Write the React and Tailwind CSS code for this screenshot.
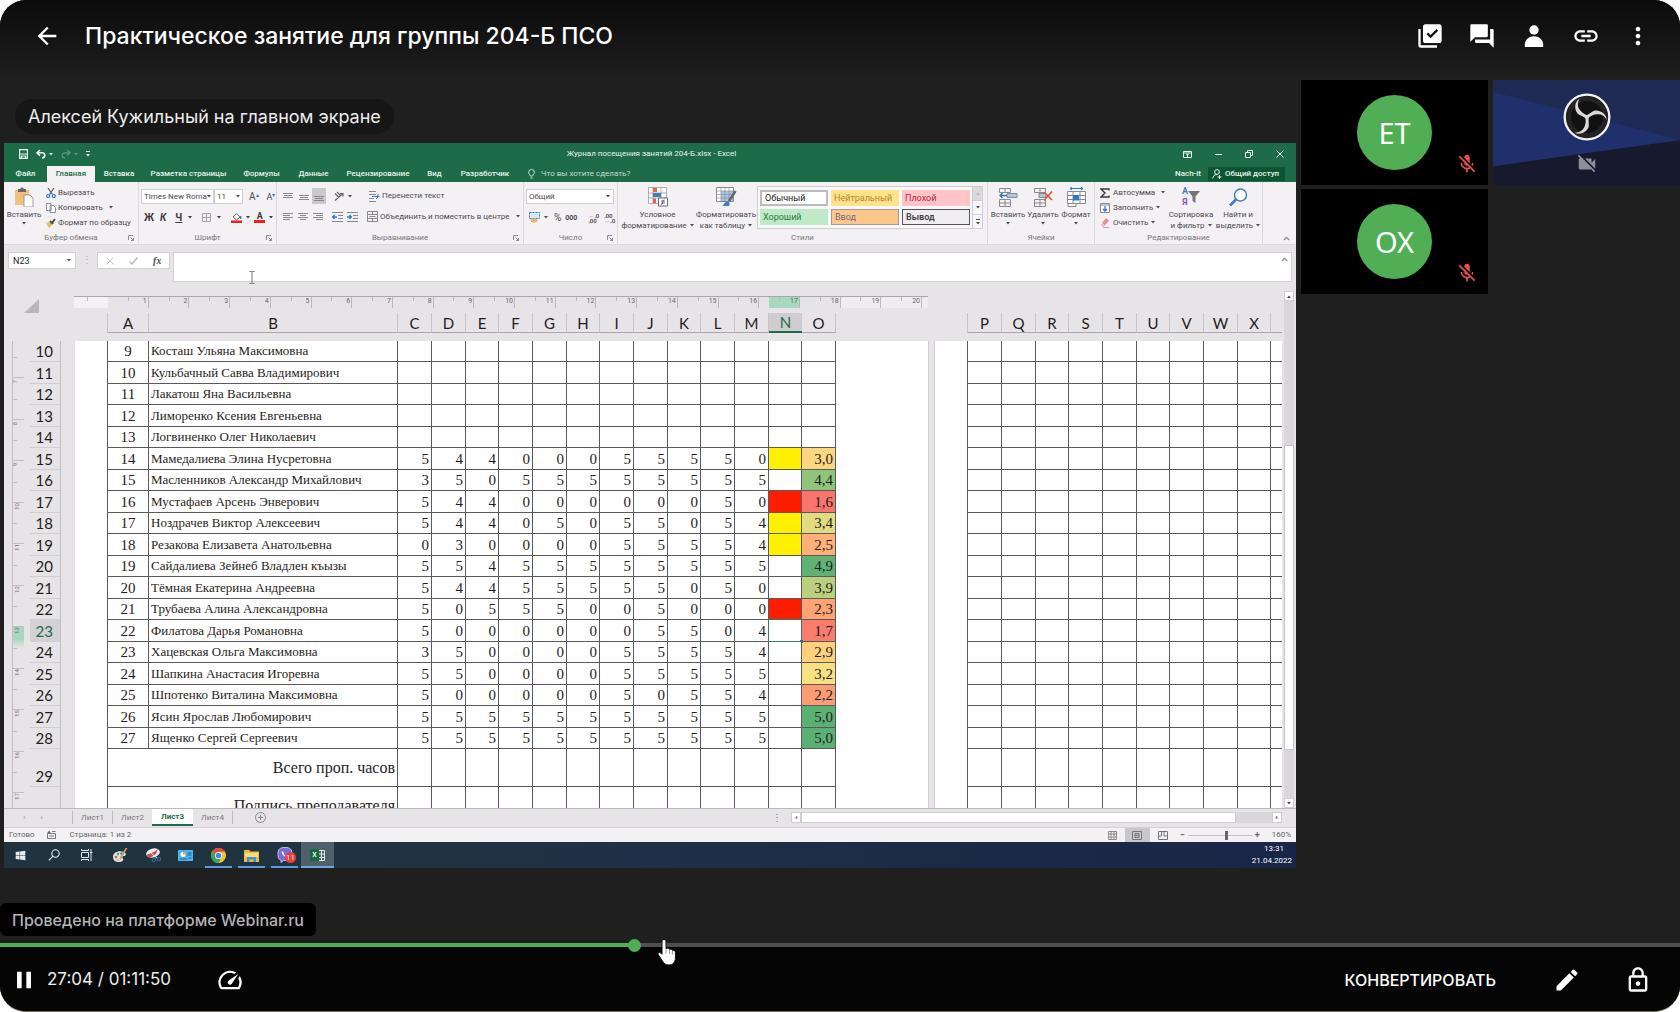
// src/App.jsx
import React, { useState } from "react";
import {
  MdArrowBack,
  MdLibraryAddCheck,
  MdForum,
  MdLink,
  MdMoreVert,
  MdMicOff,
  MdVideocamOff,
  MdPause,
  MdOutlineSpeed,
  MdEdit,
  MdOutlineLock,
} from "react-icons/md";
import { FaWindows } from "react-icons/fa";

const YELLOW = "bg-[#ffef00]";
const RED = "bg-[#ff1d00]";

const ROWS = [
  { n: 9, name: "Косташ Ульяна Максимовна" },
  { n: 10, name: "Кульбачный Савва Владимирович" },
  { n: 11, name: "Лакатош Яна Васильевна" },
  { n: 12, name: "Лиморенко Ксения Евгеньевна" },
  { n: 13, name: "Логвиненко Олег Николаевич" },
  { n: 14, name: "Мамедалиева Элина Нусретовна", marks: "54400055550", fill: YELLOW, avg: "3,0", tone: "bg-[#fdd77f]" },
  { n: 15, name: "Масленников Александр Михайлович", marks: "35055555555", avg: "4,4", tone: "bg-[#8fc47c]" },
  { n: 16, name: "Мустафаев Арсень Энверович", marks: "54400000050", fill: RED, avg: "1,6", tone: "bg-[#f8746c]" },
  { n: 17, name: "Ноздрачев Виктор Алексеевич", marks: "54405055054", fill: YELLOW, avg: "3,4", tone: "bg-[#e2dc80]" },
  { n: 18, name: "Резакова Елизавета Анатольевна", marks: "03000055554", fill: YELLOW, avg: "2,5", tone: "bg-[#fdb077]" },
  { n: 19, name: "Сайдалиева Зейнеб Владлен къызы", marks: "55455555555", avg: "4,9", tone: "bg-[#5fb274]" },
  { n: 20, name: "Тёмная Екатерина Андреевна", marks: "54455555050", avg: "3,9", tone: "bg-[#bbd07e]" },
  { n: 21, name: "Трубаева Алина Александровна", marks: "50555005000", fill: RED, avg: "2,3", tone: "bg-[#fca474]" },
  { n: 22, name: "Филатова Дарья Романовна", marks: "50000005504", selected: true, avg: "1,7", tone: "bg-[#f97c6d]" },
  { n: 23, name: "Хацевская Ольга Максимовна", marks: "35000055554", avg: "2,9", tone: "bg-[#fdd17e]" },
  { n: 24, name: "Шапкина Анастасия Игоревна", marks: "55000055555", avg: "3,2", tone: "bg-[#f8e182]" },
  { n: 25, name: "Шпотенко Виталина Максимовна", marks: "50000050554", avg: "2,2", tone: "bg-[#fb9d73]" },
  { n: 26, name: "Ясин Ярослав Любомирович", marks: "55555555555", avg: "5,0", tone: "bg-[#5ab173]" },
  { n: 27, name: "Ященко Сергей Сергеевич", marks: "55555555555", avg: "5,0", tone: "bg-[#5ab173]" },
];

const COLS_LEFT = "CDEFGHIJKLMNO".split("");
const COLS_RIGHT = "PQRSTUVWX".split("");
const V_RULER = ["7", "8", "9", "10", "11", "12", "13", "14", "15", "16", "17"];

export default function App() {
  return (
    <div className="min-h-screen bg-white font-[Inter,sans-serif]">
      <div className="flex min-h-screen flex-col overflow-hidden rounded-[26px] border-b border-[#6f7040] bg-[#1f1f1f] text-white">
        <Header />
        <main className="flex flex-1 items-start gap-[5px]">
          <section className="min-w-0 flex-1 pl-1 pt-[19px]">
            <div className="ml-[11px] flex h-[35px] w-fit items-center rounded-full bg-[#161616] px-[13px] text-[18px] text-[#ececec]">
              Алексей Кужильный на главном экране
            </div>
            <div className="mt-[9px]">
              <Excel />
            </div>
          </section>
          <Participants />
        </main>
        <Player />
      </div>
    </div>
  );
}

function Header() {
  return (
    <header className="flex h-20 items-start bg-linear-to-b from-[#0b0b0b] to-[#1f1f1f] pl-[33px] pr-[28px] pt-[22px]">
      <button aria-label="Назад">
        <MdArrowBack size={28} />
      </button>
      <h1 className="ml-6 flex-1 text-[23px] font-medium leading-7">
        Практическое занятие для группы 204-Б ПСО
      </h1>
      <div className="flex gap-6">
        <button aria-label="Тесты"><MdLibraryAddCheck size={28} /></button>
        <button aria-label="Чат"><MdForum size={28} /></button>
        <button aria-label="Участники">
          <svg width="28" height="28" viewBox="0 0 28 28" fill="currentColor">
            <circle cx="14" cy="8" r="4.7" />
            <path d="M4.8 25v-2.2c0-5.4 4.6-8.6 9.2-8.6s9.2 3.2 9.2 8.6V25z" />
          </svg>
        </button>
        <button aria-label="Ссылка"><MdLink size={28} /></button>
        <button aria-label="Ещё"><MdMoreVert size={28} /></button>
      </div>
    </header>
  );
}

/* ---------- участники ---------- */

function Participants() {
  return (
    <aside className="grid w-[379px] flex-none grid-cols-2 gap-x-[5px] gap-y-1">
      <Tile initials="ET" />
      <div className="relative aspect-video overflow-hidden bg-[#171a2e]">
        <svg className="absolute inset-0 h-full w-full" viewBox="0 0 187 105" preserveAspectRatio="none">
          <path d="M0 0H187V60L0 86Z" fill="#1f2a54" />
          <path d="M0 12L187 60L0 86Z" fill="#20306c" />
        </svg>
        <div className="relative flex flex-col items-center pt-[13px]">
          <ObsLogo />
          <MdVideocamOff className="mt-3 text-[#8e9099]" size={22} />
        </div>
      </div>
      <Tile initials="OX" />
    </aside>
  );
}

function Tile({ initials }) {
  return (
    <div className="relative flex aspect-video items-center justify-center bg-black">
      <div className="flex h-[75px] w-[75px] items-center justify-center rounded-full bg-[#50ae55] font-['Noto_Sans',sans-serif] text-[29px]">
        {initials}
      </div>
      <MdMicOff className="absolute bottom-[10px] right-[10px] text-[#ea4f4b]" size={22} />
    </div>
  );
}

function ObsLogo() {
  const blade = "M-5 -2C-4 10 -3 18 -7 28C-12 40 -22 47 -37 47C-20 56 0 44 5 30C7 20 3 10 6 -3Z";
  return (
    <svg width="48" height="48" viewBox="-72 -72 144 144">
      <circle r="67" fill="#242224" stroke="#f4f4f4" strokeWidth="7" />
      <circle r="48" fill="#121112" />
      <g fill="#d9d7d9">
        <path d={blade} />
        <path d={blade} transform="rotate(120)" />
        <path d={blade} transform="rotate(240)" />
      </g>
    </svg>
  );
}

/* ---------- плеер ---------- */

function Player() {
  const [time, setTime] = useState(1624);
  const total = 4310;
  const pct = (time / total) * 100;

  return (
    <footer className="relative">
      <div className="mb-[7px] flex h-[33px] w-fit items-center rounded-md bg-black px-3 text-[16px] font-medium text-[#b4b4b4]">
        Проведено на платформе Webinar.ru
      </div>
      <input
        type="range"
        aria-label="Позиция записи"
        min="0"
        max={total}
        value={time}
        onChange={(e) => setTime(Number(e.target.value))}
        className="block h-1 w-full appearance-none [&::-webkit-slider-thumb]:h-[13px] [&::-webkit-slider-thumb]:w-[13px] [&::-webkit-slider-thumb]:appearance-none [&::-webkit-slider-thumb]:rounded-full [&::-webkit-slider-thumb]:bg-[#50ae55]"
        style={{ background: `linear-gradient(to right, #50ae55 ${pct}%, #4f4f4f ${pct}%)` }}
      />
      <svg className="absolute left-[657px] top-[35px]" width="22" height="28" viewBox="0 0 22 28">
        <path
          d="M7 1.5c1.3 0 2 .8 2 2.1v7l1.2-.4c1.2-.2 2 .3 2.3 1.2 1.4-.5 2.5 0 2.9 1.1 1.3-.4 3 .3 3 2.2V20c0 4-2.4 7-6.4 7-3.5 0-4.8-1.3-6.6-4.1L1.5 17c-1-1.7.8-3.3 2.4-1.9L5 16.3V3.6c0-1.3.7-2.1 2-2.1z"
          fill="#fff"
          stroke="#111"
        />
        <path d="M9 10.5v5M12.5 11.5v4.5M15.5 12.5V16.5" stroke="#777" strokeWidth=".7" />
      </svg>
      <div className="flex h-16 items-center bg-[#050505] pl-[10px] pr-[28px] pt-[2px]">
        <button aria-label="Пауза"><MdPause size={28} /></button>
        <span className="ml-[9px] w-[169px] text-[17px] text-[#ececec]">27:04 / 01:11:50</span>
        <button aria-label="Скорость"><MdOutlineSpeed size={28} /></button>
        <button className="ml-auto text-[16px] font-medium">КОНВЕРТИРОВАТЬ</button>
        <button aria-label="Редактировать" className="ml-[57px]"><MdEdit size={28} /></button>
        <button aria-label="Заблокировать" className="ml-[43px]"><MdOutlineLock size={28} /></button>
      </div>
    </footer>
  );
}

/* ---------- окно Excel ---------- */

function Excel() {
  return (
    <div className="overflow-hidden bg-[#e6e4e7] font-[Roboto,sans-serif] text-[8px] leading-[10px] text-[#4c4a4e]">
      <TitleBar />
      <Ribbon />
      <FormulaBar />
      <Sheet />
      <SheetTabs />
      <StatusBar />
      <Taskbar />
    </div>
  );
}

function TitleBar() {
  return (
    <div className="h-[39px] bg-[#1e6c47] text-[#e8f3ed]">
      <div className="flex h-[22px] items-center justify-between">
        <div className="flex flex-1 items-center gap-2 pl-[15px]">
          <button aria-label="Сохранить">
            <svg width="9" height="10" viewBox="0 0 9 10" fill="none" stroke="currentColor" strokeWidth="1.2">
              <path d="M.6.6h7.8v8.8H.6zM.6 5h7.8M2.5 9.4V7h4v2.4" />
            </svg>
          </button>
          <button aria-label="Отменить" className="flex items-center gap-[3px]">
            <svg width="10" height="10" viewBox="0 0 10 10" fill="none" stroke="currentColor" strokeWidth="1.6">
              <path d="M4 1L1 3.8 4 6.6M1 3.8h5c4 0 3.6 5 0 5.2" />
            </svg>
            <Caret />
          </button>
          <button aria-label="Повторить" className="flex items-center gap-[3px] opacity-30">
            <svg width="10" height="10" viewBox="0 0 10 10" fill="none" stroke="currentColor" strokeWidth="1.3">
              <path d="M6 1l3 2.8L6 6.6M9 3.8H4c-4 0-3.6 5 0 5.2" />
            </svg>
            <Caret />
          </button>
          <svg width="4" height="6" viewBox="0 0 4 6" fill="currentColor"><path d="M0 0h4v1H0zM0 3h4L2 5.5z" /></svg>
        </div>
        <div>Журнал посещения занятий 204-Б.xlsx - Excel</div>
        <div className="flex flex-1 items-center justify-end gap-[23px] pr-3">
          <button aria-label="Параметры ленты">
            <svg width="9" height="7" viewBox="0 0 9 7" fill="none" stroke="currentColor">
              <path d="M.5.5h8v6h-8zM.5 2h8M4.5 6V3.2M3.2 4.2l1.3-1.3 1.3 1.3" />
            </svg>
          </button>
          <button aria-label="Свернуть">
            <svg width="7" height="7" viewBox="0 0 7 7" stroke="currentColor"><path d="M0 3.5h7" /></svg>
          </button>
          <button aria-label="Развернуть">
            <svg width="8" height="8" viewBox="0 0 8 8" fill="none" stroke="currentColor">
              <path d="M.5 2.5h5v5h-5zM2.5 2.5v-2h5v5h-2" />
            </svg>
          </button>
          <button aria-label="Закрыть">
            <svg width="8" height="8" viewBox="0 0 8 8" stroke="currentColor"><path d="M.5.5l7 7M7.5.5l-7 7" /></svg>
          </button>
        </div>
      </div>
      <nav className="flex h-[17px] items-center font-medium">
        <button className="w-[43px]">Файл</button>
        <button className="h-4 w-12 self-end bg-[#f3f1f4] text-[#1e6c47]">Главная</button>
        <button className="w-12">Вставка</button>
        <button className="w-[91px]">Разметка страницы</button>
        <button className="w-[55px]">Формулы</button>
        <button className="w-[49px]">Данные</button>
        <button className="w-[80px]">Рецензирование</button>
        <button className="w-[33px]">Вид</button>
        <button className="w-[68px]">Разработчик</button>
        <button className="ml-[9px] flex items-center gap-[6px] font-normal text-[#c2dccf]">
          <svg width="7" height="10" viewBox="0 0 7 10" fill="none" stroke="currentColor">
            <path d="M2.3 7C2.3 5.5.6 5 .6 3.2a2.9 2.7 0 015.8 0C6.4 5 4.7 5.5 4.7 7zM2.3 9h2.4" />
          </svg>
          Что вы хотите сделать?
        </button>
        <span className="ml-auto">Nach-it</span>
        <button className="ml-[7px] mr-[11px] flex h-[14px] w-[77px] items-center gap-[3px] bg-[#0d5532] pl-1">
          <svg width="10" height="10" viewBox="0 0 10 10" fill="none" stroke="currentColor">
            <circle cx="5" cy="3" r="2.4" />
            <path d="M.8 9.5C1 7 2.5 5.5 5 5.5M7.5 6v4M5.5 8h4" />
          </svg>
          Общий доступ
        </button>
      </nav>
    </div>
  );
}

function Caret({ className = "" }) {
  return (
    <svg className={className} width="4" height="3" viewBox="0 0 4 3" fill="currentColor">
      <path d="M0 0h4L2 2.5z" />
    </svg>
  );
}

function Group({ label, className, launcher, children }) {
  return (
    <div className={`flex flex-none flex-col border-r border-[#dad8dc] ${className}`}>
      <div className="h-[51px] pt-[3px]">{children}</div>
      <div className="relative text-center text-[#77757a]">
        {label}
        {launcher && (
          <svg className="absolute right-1 top-[2px]" width="6" height="6" viewBox="0 0 6 6" fill="none" stroke="currentColor" strokeWidth=".8">
            <path d="M.5 5V.5H5M2.5 2.5l3 3M5.5 3v2.5H3" />
          </svg>
        )}
      </div>
    </div>
  );
}

function BigButton({ lines, caretBelow, className, children }) {
  return (
    <button className={`flex flex-col items-center pt-[2px] ${className}`}>
      <span className="flex h-5 items-center">{children}</span>
      <span className="mt-[3px] block whitespace-nowrap">{lines[0]}</span>
      <span className="flex h-[11px] items-center gap-[3px] whitespace-nowrap">
        {lines[1]}
        <Caret className={caretBelow ? "mb-1" : ""} />
      </span>
    </button>
  );
}

function AlignIcon({ rows }) {
  return (
    <svg width="10" height="9" viewBox="0 0 10 9" stroke="#8a888c">
      {rows.map(([a, b], i) => (
        <path key={i} d={`M${a} ${i * 2 + 1.5}H${b}`} />
      ))}
    </svg>
  );
}

function IndentIcon({ out }) {
  return (
    <svg width="11" height="10" viewBox="0 0 11 10" fill="none" stroke="#8a888c">
      <path d="M0 .5h11M6 3.5h5M6 6.5h5M0 9.5h11" />
      <path d={out ? "M5 5H.8M2.5 3L.6 5l1.9 2" : "M0 5h4.2M2.5 3l1.9 2-1.9 2"} stroke="#2f78c4" strokeWidth="1.3" />
    </svg>
  );
}

function CellsIcon({ children }) {
  return (
    <svg width="19" height="19" viewBox="0 0 19 19" fill="none" stroke="#8a888c">
      <path d="M.5.5h11v4H.5zM6 .5v4M.5 11.5h11v7H.5zM6 11.5v7M.5 15h11" />
      {children}
    </svg>
  );
}

function Ribbon() {
  return (
    <div className="flex h-[62px] overflow-hidden bg-[#f3f1f4]">
      <Group label="Буфер обмена" className="w-[135px]" launcher>
        <div className="flex">
          <BigButton lines={["Вставить", ""]} caretBelow className="w-10">
            <svg width="20" height="20" viewBox="0 0 20 20">
              <path d="M1 3h14v15H1z" fill="#edc27a" />
              <path d="M4 2h2l2-2 2 2h2v3H4z" fill="#67656a" />
              <path d="M10 8h6l3 3v9h-9z" fill="#fff" stroke="#8a888c" strokeWidth=".8" />
            </svg>
          </BigButton>
          <div className="flex flex-col pl-[2px]">
            <button className="flex h-[15px] items-center gap-[2px] whitespace-nowrap">
              <svg width="10" height="10" viewBox="0 0 10 10" fill="none" stroke="#5a5f6a" strokeWidth="1.2">
                <path d="M2 0l4.5 6.5M8 0L3.5 6.5" />
                <circle cx="2.2" cy="8" r="1.5" stroke="#2f78c4" />
                <circle cx="7.8" cy="8" r="1.5" stroke="#2f78c4" />
              </svg>
              Вырезать
            </button>
            <button className="flex h-[15px] items-center gap-[2px] whitespace-nowrap">
              <svg width="10" height="10" viewBox="0 0 10 10" fill="#fff" stroke="#7b8596" strokeWidth=".9">
                <path d="M.5.5h4.5v7H.5zM4 2.5h3.5l2 2v5H4z" />
              </svg>
              Копировать <Caret className="ml-1" />
            </button>
            <button className="flex h-[15px] items-center gap-[2px] whitespace-nowrap">
              <svg width="10" height="10" viewBox="0 0 10 10">
                <path d="M0 5l4-1 2 3-3 3z" fill="#edb65e" />
                <path d="M4 3l3 3M6 5l3-4" stroke="#4c4a4e" strokeWidth="1.8" />
              </svg>
              Формат по образцу
            </button>
          </div>
        </div>
      </Group>

      <Group label="Шрифт" className="w-[138px]" launcher>
        <div className="flex items-center pl-[2px] pt-1">
          <div className="flex h-[15px] w-[73px] items-center border border-[#cfcdd1] bg-white px-[2px]">
            <input aria-label="Шрифт" className="min-w-0 flex-1" defaultValue="Times New Roma" />
            <Caret />
          </div>
          <div className="flex h-[15px] w-[29px] items-center border border-[#cfcdd1] bg-white px-[2px]">
            <input aria-label="Размер шрифта" className="min-w-0 flex-1" defaultValue="11" />
            <Caret />
          </div>
          <button className="ml-[6px] text-[10px]">A<sup className="text-[6px] text-[#2f78c4]">▴</sup></button>
          <button className="ml-2 text-[9px]">A<sup className="text-[6px] text-[#2f78c4]">▾</sup></button>
        </div>
        <div className="mt-2 flex items-center pl-[5px] text-[10px] text-[#3c3a3e]">
          <button className="font-bold">Ж</button>
          <button className="ml-[6px] font-bold italic">К</button>
          <button className="ml-[9px] font-bold underline">Ч</button>
          <Caret className="ml-[6px]" />
          <button aria-label="Границы" className="ml-[10px]">
            <svg width="9" height="9" viewBox="0 0 9 9" fill="none" stroke="#a5a3a7">
              <path d="M.5.5h8v8h-8zM4.5.5v8M.5 4.5h8" />
            </svg>
          </button>
          <Caret className="ml-[6px]" />
          <button aria-label="Цвет заливки" className="ml-[10px]">
            <svg width="11" height="11" viewBox="0 0 11 11">
              <path d="M2 5l3.5-3.5L9 5 5.5 8z" fill="#fff" stroke="#67656a" />
              <path d="M9.5 4v3" stroke="#2f78c4" strokeWidth="1.5" />
              <path d="M0 8.5h11V11H0z" fill="#f51f12" />
            </svg>
          </button>
          <Caret className="ml-1" />
          <button aria-label="Цвет шрифта" className="ml-1 h-[11px] w-[11px] border-b-[3px] border-[#f51f12] text-[9px] font-bold leading-[8px]">А</button>
          <Caret className="ml-1" />
        </div>
      </Group>

      <Group label="Выравнивание" className="w-[247px]" launcher>
        <div className="flex items-center pl-[6px] pt-[3px]">
          <AlignIcon rows={[[0, 10], [1, 9], [0, 10]]} />
          <span className="w-[6px]" />
          <AlignIcon rows={[[0, 0], [0, 10], [1, 9], [0, 10]]} />
          <span className="ml-[3px] flex h-4 w-[14px] items-end justify-center bg-[#cac8cc] pb-[2px]">
            <AlignIcon rows={[[0, 0], [0, 10], [1, 9], [0, 10]]} />
          </span>
          <svg className="ml-2" width="11" height="10" viewBox="0 0 11 10" fill="none" stroke="#67656a" strokeWidth="1.2">
            <path d="M1 2.5l4 4M3 1l4 4M1 9.5l8-7M6 2.5h3v3" />
          </svg>
          <Caret className="ml-[3px]" />
          <button className="ml-[17px] flex items-center gap-[2px] whitespace-nowrap">
            <svg width="11" height="11" viewBox="0 0 11 11" fill="none" stroke="#8a888c">
              <path d="M0 .5h7M0 3.5h7M0 7.5h5M0 10.5h7" />
              <path d="M3 5.5h7.5M9 3v3L7 8" stroke="#2f78c4" />
            </svg>
            Перенести текст
          </button>
        </div>
        <div className="mt-[7px] flex items-center pl-[6px]">
          <AlignIcon rows={[[0, 10], [0, 7], [0, 10], [0, 7]]} />
          <span className="w-[5px]" />
          <AlignIcon rows={[[0, 10], [2, 8], [0, 10], [2, 8]]} />
          <span className="w-[5px]" />
          <AlignIcon rows={[[0, 10], [3, 10], [0, 10], [3, 10]]} />
          <span className="w-[9px]" />
          <IndentIcon out />
          <span className="w-1" />
          <IndentIcon />
          <button className="ml-[9px] flex items-center gap-[2px] whitespace-nowrap">
            <svg width="11" height="11" viewBox="0 0 11 11" fill="none" stroke="#8a888c">
              <path d="M.5.5h10v10H.5zM.5 3.5h10M.5 7.5h10M5.5.5v3M5.5 7.5v3M2.5 5.5h6" />
            </svg>
            Объединить и поместить в центре
            <Caret className="ml-1" />
          </button>
        </div>
      </Group>

      <Group label="Число" className="w-[94px]" launcher>
        <div className="pl-[2px] pt-1">
          <div className="relative w-[88px]">
            <select aria-label="Формат числа" className="block h-[15px] w-full appearance-none border border-[#cfcdd1] bg-white pl-[2px]">
              <option>Общий</option>
            </select>
            <Caret className="pointer-events-none absolute right-1 top-[6px]" />
          </div>
        </div>
        <div className="mt-2 flex items-center pl-[5px]">
          <svg width="11" height="11" viewBox="0 0 11 11">
            <path d="M.5.5h10v6H.5z" fill="#d8e8f8" stroke="#2f78c4" strokeDasharray="2 1" />
            <ellipse cx="5" cy="8.5" rx="3.5" ry="2" fill="#edb65e" />
          </svg>
          <Caret className="ml-1" />
          <span className="ml-[6px] text-[10px]">%</span>
          <span className="ml-1 text-[7px] font-bold">000</span>
          <span className="ml-[11px] text-[6px] font-semibold leading-[5px]"><span className="text-[#2f78c4]">←</span>,0<br />,00</span>
          <span className="ml-[5px] text-[6px] font-semibold leading-[5px]">,00<br /><span className="text-[#2f78c4]">→</span>,0</span>
        </div>
      </Group>

      <Group label="Стили" className="w-[370px]">
        <div className="flex pl-[2px]">
          <BigButton lines={["Условное", "форматирование"]} className="w-[75px]">
            <svg width="20" height="20" viewBox="0 0 20 20" fill="none" stroke="#9a989c" strokeWidth=".8">
              <path d="M.5.5h18v16H.5zM5 .5v16M13 .5v16M.5 6h18M.5 11h18" fill="#fff" />
              <path d="M5 1h4v4H5zM5 11.5h3V16H5z" fill="#e0693a" stroke="none" />
              <path d="M5 6h8v4H5z" fill="#3f7fc4" stroke="none" />
              <path d="M10.5 11h9v8h-9zM13 14h4M13 16h4M16 12.5L13.5 18" fill="#fff" stroke="#4c4a4e" />
            </svg>
          </BigButton>
          <BigButton lines={["Форматировать", "как таблицу"]} className="w-[62px]">
            <svg width="21" height="20" viewBox="0 0 21 20">
              <path d="M.5.5h17v14H.5z" fill="#fff" stroke="#8a888c" />
              <path d="M5 4h12v10H5z" fill="#a9c8e8" />
              <path d="M5 .5v14M9 .5v14M13 .5v14M.5 4h17M.5 7.5h17M.5 11h17" stroke="#8a888c" strokeWidth=".6" />
              <path d="M19.5 4L13 14" stroke="#67656a" strokeWidth="2.5" />
              <path d="M6 19c2 0 2-5 6-4.5 3 1.5 1 4.5 1 4.5z" fill="#3f7fc4" />
            </svg>
          </BigButton>
          <div className="mt-px flex h-[43px] border border-[#cfcdd1] bg-[#f8f7f9]">
            <div className="grid grid-cols-[68px_68px_68px] content-center gap-x-[3px] gap-y-[3px] px-[2px] text-[9px] leading-3">
              <button className="h-4 border-2 border-[#bdbbbf] bg-white pl-[3px] text-left text-[#222]">Обычный</button>
              <button className="h-4 bg-[#ffe28b] pl-[3px] text-left text-[#b8872a]">Нейтральный</button>
              <button className="h-4 bg-[#ffc4c8] pl-[3px] text-left text-[#b02a3c]">Плохой</button>
              <button className="h-4 bg-[#bfeac8] pl-[3px] text-left text-[#2b7a3c]">Хороший</button>
              <button className="h-4 border border-[#a09a94] bg-[#fdc78c] pl-[3px] text-left text-[#746a86]">Ввод</button>
              <button className="h-4 border border-[#55535a] bg-[#f0eef1] pl-[3px] text-left font-semibold text-[#3f3f3f]">Вывод</button>
            </div>
            <div className="flex w-[10px] flex-col divide-y divide-[#cfcdd1] border-l border-[#cfcdd1]">
              <button aria-label="Вверх" className="flex flex-1 items-center justify-center bg-[#dcdadd] text-[#b5b3b7]"><Caret className="rotate-180" /></button>
              <button aria-label="Вниз" className="flex flex-1 items-center justify-center"><Caret /></button>
              <button aria-label="Все стили" className="flex flex-1 items-center justify-center">
                <svg width="4" height="6" viewBox="0 0 4 6" fill="currentColor"><path d="M0 0h4v1H0zM0 3h4L2 5.5z" /></svg>
              </button>
            </div>
          </div>
        </div>
      </Group>

      <Group label="Ячейки" className="w-[107px]">
        <div className="flex pl-[2px]">
          <BigButton lines={["Вставить", ""]} caretBelow className="w-9">
            <CellsIcon>
              <path d="M8 5.5h10v4H8z" fill="#a9c8e8" />
              <path d="M8 7.5H1M3.5 5L1 7.5 3.5 10" stroke="#2f78c4" strokeWidth="1.5" />
            </CellsIcon>
          </BigButton>
          <BigButton lines={["Удалить", ""]} caretBelow className="w-[34px]">
            <CellsIcon>
              <path d="M5 5.5h7v4H5z" fill="#a9c8e8" />
              <path d="M10 4l8 8M18 3.5l-8 9" stroke="#e0592a" strokeWidth="1.6" />
            </CellsIcon>
          </BigButton>
          <BigButton lines={["Формат", ""]} caretBelow className="w-8">
            <svg width="19" height="20" viewBox="0 0 19 20" fill="none" stroke="#8a888c">
              <path d="M.5 4.5h18v12H.5zM6 4.5v12M13 4.5v12M.5 8.5h18M.5 12.5h18M1 17v2.5h8V17" fill="#fff" />
              <path d="M6 8h6v5.5H6z" fill="#2f78c4" stroke="none" />
              <path d="M3 1.5h13M5 0L3 1.5 5 3M14 0l2 1.5L14 3" stroke="#2f78c4" />
            </svg>
          </BigButton>
        </div>
      </Group>

      <Group label="Редактирование" className="w-[168px]">
        <div className="flex pl-[5px]">
          <div className="flex w-[66px] flex-col">
            <button className="flex h-[15px] items-center gap-[3px] whitespace-nowrap">
              <svg width="10" height="10" viewBox="0 0 10 10" fill="none" stroke="#3c3a3e" strokeWidth="1.4">
                <path d="M9 2.5V1H1l4 4-4 4h8V7.5" />
              </svg>
              Автосумма <Caret className="ml-[3px]" />
            </button>
            <button className="flex h-[15px] items-center gap-[3px] whitespace-nowrap">
              <svg width="10" height="10" viewBox="0 0 10 10" fill="#fff" stroke="#8a888c">
                <path d="M.5.5h9v9h-9zM.5 2h9" />
                <path d="M5 3v5M3 6l2 2 2-2" stroke="#2f78c4" strokeWidth="1.3" fill="none" />
              </svg>
              Заполнить <Caret />
            </button>
            <button className="flex h-[15px] items-center gap-[3px] whitespace-nowrap">
              <svg width="10" height="10" viewBox="0 0 10 10">
                <path d="M2 5l4-5 3 2.5-4 5z" fill="#f08a98" />
                <path d="M2 5L.8 7l2 2L5 7.5z" fill="#f6b8c0" />
                <path d="M3 9.5h6" stroke="#b5a3a7" />
              </svg>
              Очистить <Caret />
            </button>
          </div>
          <BigButton lines={["Сортировка", "и фильтр"]} className="w-[50px]">
            <span className="flex items-center">
              <span className="text-[9px] font-bold leading-[11px]">
                <span className="block text-[#3f7fc4]">А</span>
                <span className="block text-[#9355b0]">Я</span>
              </span>
              <svg width="12" height="12" viewBox="0 0 12 12" fill="#77757a"><path d="M0 0h12L7.5 5.5V12L4.5 10V5.5z" /></svg>
            </span>
          </BigButton>
          <BigButton lines={["Найти и", "выделить"]} className="w-[44px]">
            <svg width="19" height="19" viewBox="0 0 19 19" fill="none" stroke="#3f7fc4">
              <circle cx="11.5" cy="7" r="6" strokeWidth="1.5" fill="#fff" />
              <path d="M7 11.5L1 17.5" strokeWidth="2.6" />
            </svg>
          </BigButton>
        </div>
      </Group>
      <button aria-label="Свернуть ленту" className="ml-auto mr-[6px] self-end pb-[3px]">
        <Chevron />
      </button>
    </div>
  );
}

function Chevron() {
  return (
    <svg width="7" height="5" viewBox="0 0 7 5" fill="none" stroke="#8a888c" strokeWidth="1.2">
      <path d="M.8 4l2.7-2.7L6.2 4" />
    </svg>
  );
}

function FormulaBar() {
  return (
    <div className="flex items-start border-t border-[#dbd9dc] pl-1 pr-1 pt-[7px]">
      <div className="flex h-[17px] w-[68px] items-center border border-[#d2d0d4] bg-white pr-1">
        <input aria-label="Имя ячейки" className="min-w-0 flex-1 pl-1 text-[9px] text-[#222]" defaultValue="N23" />
        <Caret />
      </div>
      <span className="w-[21px] text-center text-[10px] leading-4 text-[#aaa8ac]">⋮</span>
      <div className="flex h-[17px] w-[73px] items-center justify-around border border-[#d2d0d4] bg-white">
        <svg width="8" height="8" viewBox="0 0 8 8" stroke="#c5c3c7"><path d="M.5.5l7 7M7.5.5l-7 7" /></svg>
        <svg width="9" height="8" viewBox="0 0 9 8" fill="none" stroke="#b5b3b7" strokeWidth="1.3"><path d="M.5 4.5L3 7l5.5-6.5" /></svg>
        <span className="font-['Liberation_Serif',serif] text-[10px] font-bold italic">fx</span>
      </div>
      <div className="relative ml-[3px] flex h-[30px] flex-1 items-start border border-[#d2d0d4] bg-white pr-[3px]">
        <input aria-label="Строка формул" className="h-full min-w-0 flex-1" />
        <span className="pt-1"><Chevron /></span>
        <svg className="absolute left-[75px] top-[18px]" width="6" height="13" viewBox="0 0 6 13" fill="none" stroke="#77757a">
          <path d="M.5.5h2l.5.5.5-.5h2M.5 12.5h2l.5-.5.5.5h2M3 1v11" />
        </svg>
      </div>
    </div>
  );
}

function rulerTone(i) {
  if (i === 16) return "bg-linear-to-r from-transparent from-25% to-[#a8d8bf] to-25%";
  return i > 17 ? "bg-[#efedf0]" : "";
}

function Ruler() {
  return (
    <div className="flex h-[17px]">
      <div className="flex w-[70px] justify-end pr-[35px] pt-[3px]">
        <svg width="15" height="14" viewBox="0 0 15 14"><path d="M15 0v14H0z" fill="#b9b7bb" /></svg>
      </div>
      <div className="flex h-3 w-[854px] border-t border-[#a9a7ab] text-[7px] leading-[9px] text-[#67656a]">
        <div className="w-[34px] bg-[#f3f1f4]">
          <div className="ml-[13px] h-1 border-l border-[#bbb9bd]" />
        </div>
        <div className="grid w-[814px] grid-cols-[repeat(20,minmax(0,1fr))]">
          {Array.from({ length: 20 }, (_, i) => (
            <div key={i} className={`relative h-[11px] border-r border-[#bbb9bd] pr-px text-right ${rulerTone(i)}`}>
              <span className="absolute left-1/2 top-0 h-1 border-l border-[#bbb9bd]" />
              {i + 1}
            </div>
          ))}
        </div>
        <div className="flex-1 bg-[#efedf0]" />
      </div>
    </div>
  );
}

const colWidth = (i) => (i % 3 === 2 ? "w-[33px]" : "w-[34px]");
const line = "border-b border-r border-[#5b595e]";
const head = "border-b border-r border-b-[#a9a7ab] border-r-[#c6c4c8] font-normal";

function Sheet() {
  return (
    <div className="flex h-[526px]">
      <div className="min-w-0 flex-1 overflow-hidden pt-[14px]">
        <Ruler />
        <div className="flex items-start">
          <div className="w-[26px] flex-none pl-2 pt-[28px]">
            <div className="w-3 border-l border-[#c1bfc3] text-[6px] leading-[7px] text-[#77757a]">
              <div className="h-9 pt-[16px]"><div className="w-1 border-t border-[#c1bfc3]" /></div>
              {V_RULER.map((n) => (
                <div
                  key={n}
                  className={`relative border-t border-[#c1bfc3] odd:h-[41px] even:h-[42px] ${n === "13" ? "bg-linear-to-b from-[#a8d8bf] from-30% to-transparent to-50%" : ""}`}
                >
                  <span className="inline-block -rotate-90">{n}</span>
                  <span className="absolute left-0 top-1/2 w-1 border-t border-[#c1bfc3]" />
                </div>
              ))}
            </div>
          </div>
          <table className="w-full table-fixed border-separate border-spacing-0 font-['Liberation_Serif',serif] text-[15px] leading-4 text-[#1f1d21]">
            <colgroup>
              <col className="w-[31px]" />
              <col className="w-[14px]" />
              <col className="w-[33px]" />
              <col className="w-[41px]" />
              <col className="w-[249px]" />
              {COLS_LEFT.map((c, i) => <col key={c} className={colWidth(i)} />)}
              <col className="w-[92px]" />
              <col className="w-[7px]" />
              <col className="w-[33px]" />
              {COLS_RIGHT.map((c, i) => <col key={c} className={colWidth(i)} />)}
              <col />
            </colgroup>
            <thead className="font-[Lato,sans-serif] text-[15px]">
              <tr className="h-5">
                <th colSpan={2} />
                <th className="border-r border-[#c6c4c8]" />
                <th className={head}>A</th>
                <th className={head}>B</th>
                {COLS_LEFT.map((c) => (
                  <th key={c} className={c === "N" ? "border-b-2 border-[#1e6c47] bg-[#cfcdd0] font-normal text-[#1e6c47]" : head}>{c}</th>
                ))}
                <th colSpan={2} />
                <th className="border-r border-[#c6c4c8]" />
                {COLS_RIGHT.map((c) => <th key={c} className={head}>{c}</th>)}
                <th className="border-b border-[#a9a7ab]" />
              </tr>
              <tr className="h-2"><td colSpan={31} /></tr>
            </thead>
            <tbody>
              {ROWS.map((r) => (
                <tr key={r.n} className="odd:h-[21px] even:h-[22px]">
                  <RowHead n={r.n + 1} active={r.selected} />
                  <td className={`${line} bg-white text-center`}>{r.n}</td>
                  <td className={`${line} whitespace-nowrap bg-white pl-[2px] text-[13px]`}>{r.name}</td>
                  {COLS_LEFT.slice(0, 11).map((c, i) => (
                    <td key={c} className={`${line} bg-white pr-[2px] text-right`}>{r.marks ? r.marks[i] : ""}</td>
                  ))}
                  <td className={`${line} relative ${r.fill || "bg-white"}`}>
                    {r.selected && (
                      <span className="absolute -inset-px border border-[#2f7d62]">
                        <span className="absolute -bottom-[2px] -right-[2px] h-[3px] w-[3px] bg-[#2f7d62]" />
                      </span>
                    )}
                  </td>
                  <td className={`${line} pr-[2px] text-right ${r.tone || "bg-white"}`}>{r.avg}</td>
                  <PageTwo />
                </tr>
              ))}
              <TotalRow n={29} label="Всего проп. часов" />
              <TotalRow n="" label="Подпись преподавателя" />
            </tbody>
          </table>
        </div>
      </div>
      <div className="flex w-[14px] flex-none flex-col px-[2px] pt-[9px]">
        <button aria-label="Прокрутить вверх" className="flex h-[10px] items-center justify-center border border-[#cfcdd1] bg-white"><Caret className="rotate-180" /></button>
        <div className="flex-1 bg-[#d9d7db] pt-[144px]">
          <div className="h-[305px] border border-[#c6c4c8] bg-white" />
        </div>
        <button aria-label="Прокрутить вниз" className="flex h-[10px] items-center justify-center border border-[#cfcdd1] bg-white"><Caret /></button>
      </div>
    </div>
  );
}

function RowHead({ n, active, low }) {
  return (
    <>
      <th
        scope="row"
        className={`border-b border-r border-b-[#d0ced2] border-r-[#c1bfc3] pr-[7px] text-right font-[Lato,sans-serif] font-normal ${active ? "bg-[#d3d1d4] text-[#1e6c47]" : ""} ${low ? "pb-[2px] align-bottom" : ""}`}
      >
        {n}
      </th>
      <td />
      <td className="border-r border-[#5b595e] bg-white" />
    </>
  );
}

function PageTwo() {
  return (
    <>
      <td className="bg-white" />
      <td className="border-x border-[#cfcdd1] bg-[#e6e4e7]" />
      <td className="border-r border-[#5b595e] bg-white" />
      {COLS_RIGHT.map((c) => <td key={c} className={`${line} bg-white`} />)}
      <td className="border-b border-[#5b595e] bg-white" />
    </>
  );
}

function TotalRow({ n, label }) {
  return (
    <tr className="h-[38px]">
      <RowHead n={n} low />
      <td colSpan={2} className={`${line} bg-white pr-[2px] text-right text-[16px]`}>{label}</td>
      {COLS_LEFT.map((c) => <td key={c} className={`${line} bg-white`} />)}
      <PageTwo />
    </tr>
  );
}

function SheetTabs() {
  return (
    <div className="flex h-[19px] items-start border-t border-[#bbb9bd] text-[#77757a]">
      <div className="flex h-4 w-[68px] items-center gap-[14px] pl-[18px] text-[#bbb9bd]">
        <Caret className="rotate-90" />
        <Caret className="-rotate-90" />
      </div>
      <button className="mt-[2px] h-[13px] w-10 border-l border-[#bbb9bd]">Лист1</button>
      <button className="mt-[2px] h-[13px] w-10 border-l border-[#bbb9bd]">Лист2</button>
      <button className="h-[17px] w-[41px] border-b-2 border-[#1e6c47] bg-white font-bold text-[#1e6c47]">Лист3</button>
      <button className="mt-[2px] h-[13px] w-10 border-r border-[#bbb9bd]">Лист4</button>
      <button aria-label="Новый лист" className="ml-[22px] mt-[3px]">
        <svg width="11" height="11" viewBox="0 0 11 11" fill="none" stroke="#8a888c">
          <circle cx="5.5" cy="5.5" r="5" />
          <path d="M5.5 3v5M3 5.5h5" />
        </svg>
      </button>
      <span className="ml-auto mt-1 text-[10px]">⋮</span>
      <div className="ml-[9px] mr-[14px] mt-[3px] flex h-[11px] w-[491px] bg-[#d9d7db]">
        <button aria-label="Влево" className="flex w-[10px] items-center justify-center border border-[#cfcdd1] bg-white"><Caret className="rotate-90" /></button>
        <div className="w-[435px] border border-[#cfcdd1] bg-white" />
        <button aria-label="Вправо" className="ml-auto flex w-[10px] items-center justify-center border border-[#cfcdd1] bg-white"><Caret className="-rotate-90" /></button>
      </div>
    </div>
  );
}

function StatusBar() {
  return (
    <div className="flex h-[15px] items-center border-t border-[#d2d0d4] bg-[#f3f1f4] pl-[5px] pr-[5px] text-[#67656a]">
      <span>Готово</span>
      <svg className="ml-3" width="9" height="8" viewBox="0 0 9 8" fill="none" stroke="#77757a">
        <path d="M.5 2.5h8v5h-8zM2 5h5M5 .5h3.5" />
        <circle cx="2" cy="1.5" r="1" fill="#3c3a3e" />
      </svg>
      <span className="ml-[14px]">Страница: 1 из 2</span>
      <button aria-label="Обычный" className="ml-auto px-2">
        <svg width="9" height="9" viewBox="0 0 9 9" fill="none" stroke="#77757a" strokeWidth=".8"><path d="M.5.5h8v8h-8zM3 .5v8M6 .5v8M.5 3h8M.5 6h8" /></svg>
      </button>
      <button aria-label="Разметка страницы" className="flex h-[14px] w-[25px] items-center justify-center bg-[#c9c7ca]">
        <svg width="10" height="9" viewBox="0 0 10 9" fill="none" stroke="#77757a"><path d="M.5.5h9v8h-9zM3 2.5h4v4H3zM3 4.5h4" /></svg>
      </button>
      <button aria-label="Страничный режим" className="px-2">
        <svg width="10" height="9" viewBox="0 0 10 9" fill="none" stroke="#77757a"><path d="M.5.5h9v8h-9zM3.5.5v4.5h-3M6 .5V5h3" /></svg>
      </button>
      <span className="ml-1 text-[9px] font-bold">−</span>
      <input
        type="range"
        aria-label="Масштаб"
        defaultValue="61"
        className="mx-[3px] h-px w-[64px] appearance-none bg-[#cdbfc6] [&::-webkit-slider-thumb]:h-[9px] [&::-webkit-slider-thumb]:w-[3px] [&::-webkit-slider-thumb]:appearance-none [&::-webkit-slider-thumb]:bg-[#67656a]"
      />
      <span className="text-[9px] font-bold">+</span>
      <span className="ml-3">160%</span>
    </div>
  );
}

function TaskItem({ label, open, active, children }) {
  return (
    <button
      aria-label={label}
      className={`relative flex h-[26px] w-[33px] items-center justify-center ${active ? "bg-[#4e606c]" : ""}`}
    >
      {children}
      {open && <span className="absolute inset-x-[3px] bottom-0 h-[2px] bg-[#5f9bd8]" />}
      {active && <span className="absolute inset-x-0 bottom-0 h-[2px] bg-[#6fa8e0]" />}
    </button>
  );
}

function Taskbar() {
  return (
    <div className="flex h-[26px] items-center bg-linear-to-r from-[#20343f] from-20% via-[#1e3045] to-[#192547] text-[#e6ebf0]">
      <TaskItem label="Пуск"><FaWindows size={11} /></TaskItem>
      <TaskItem label="Поиск">
        <svg width="12" height="12" viewBox="0 0 12 12" fill="none" stroke="currentColor" strokeWidth="1.1">
          <circle cx="7.5" cy="4.5" r="3.7" />
          <path d="M5 7.2L.8 11.4" />
        </svg>
      </TaskItem>
      <TaskItem label="Представление задач">
        <svg width="12" height="12" viewBox="0 0 12 12" fill="none" stroke="currentColor">
          <path d="M.5 3.5h7v5h-7zM.5 0v1.5h7V0M.5 12v-1.5h7V12M10 0v12M9 3.5h2.5" />
        </svg>
      </TaskItem>
      <TaskItem label="Paint">
        <svg width="16" height="15" viewBox="0 0 16 15">
          <path d="M1 9c0-5 6-7 11-5 3 1.5 2 4 0 4s-2 2-1 3-1 3-4 3c-4 0-6-2-6-5z" fill="#d9e3ea" />
          <circle cx="4" cy="9" r="1.3" fill="#e0592a" />
          <circle cx="6" cy="6" r="1.2" fill="#4aa35a" />
          <circle cx="9.5" cy="5.5" r="1.2" fill="#3f7fc4" />
          <circle cx="6" cy="12" r="1.2" fill="#edb65e" />
          <path d="M14.5 0L8 11" stroke="#d79a4a" strokeWidth="1.7" />
        </svg>
      </TaskItem>
      <TaskItem label="Ножницы">
        <svg width="16" height="15" viewBox="0 0 16 15">
          <ellipse cx="8" cy="5" rx="7" ry="4.5" transform="rotate(-15 8 5)" fill="#f0eef1" />
          <path d="M1 7l8-3 4-3-2 5-6 4z" fill="#cf4a55" />
          <path d="M6 5l7 6" stroke="#f0eef1" />
          <circle cx="9" cy="12" r="1.7" fill="none" stroke="#28658c" strokeWidth="1.3" />
          <circle cx="14" cy="11" r="1.7" fill="none" stroke="#28658c" strokeWidth="1.3" />
        </svg>
      </TaskItem>
      <TaskItem label="Панель управления">
        <svg width="15" height="11" viewBox="0 0 15 11">
          <path d="M0 0h15v11H0z" fill="#4fb0ec" />
          <circle cx="5" cy="4.5" r="2.5" fill="#fff" />
          <path d="M5 2v2.5h2.5A2.5 2.5 0 005 2z" fill="#e8a33a" />
          <path d="M9.5 3h4M9.5 5h4M2 9h7M10.5 8h3" stroke="#1d5f96" />
        </svg>
      </TaskItem>
      <TaskItem label="Chrome" open>
        <svg width="15" height="15" viewBox="0 0 30 30">
          <circle cx="15" cy="15" r="15" fill="#f4c430" />
          <path d="M15 15L2 7.5A15 15 0 0128 7.5H15z" fill="#e2483a" />
          <path d="M2 7.5A15 15 0 0015 30l6.5-11.5L15 15z" fill="#3aa757" />
          <circle cx="15" cy="15" r="7" fill="#fff" />
          <circle cx="15" cy="15" r="5.5" fill="#4486f0" />
        </svg>
      </TaskItem>
      <TaskItem label="Проводник" open>
        <svg width="15" height="13" viewBox="0 0 15 13">
          <path d="M0 1h5l1.5 1.5H15V13H0z" fill="#f0b93a" />
          <path d="M1 4h13v4H1z" fill="#fbdc7c" />
          <path d="M3 13V8h9v5h-2.5v-2.5h-4V13z" fill="#3f8fd8" />
        </svg>
      </TaskItem>
      <TaskItem label="Viber" open>
        <svg width="16" height="16" viewBox="0 0 16 16">
          <path d="M8 .5C2.5.5 1 2.5 1 7s1 5.5 3 6.3V15.5L6.5 13.5H8c5.5 0 7-2 7-6.5S13.5.5 8 .5z" fill="#7a68dc" stroke="#c9c2f4" />
          <path d="M5 4c-1 1 0 3 1.500 4.500S10 11 11 10l-1.500-1.500-1 .5L6.500 7 7 6z" fill="#fff" />
        </svg>
        <span className="absolute bottom-[5px] right-[5px] h-[11px] w-[11px] rounded-full bg-[#ec3f34] text-center text-[8px] leading-[11px]">11</span>
      </TaskItem>
      <TaskItem label="Excel" active>
        <span className="flex h-3 w-[9px] items-center justify-center bg-[#14693f] text-[7px] font-bold">X</span>
        <svg width="6" height="11" viewBox="0 0 6 11" fill="none" stroke="#dfe9e4"><path d="M0 .5h5.5v10H0M0 4h5.5M0 7.5h5.5M2.5.5v10" /></svg>
      </TaskItem>
      <div className="ml-auto pr-1 text-right text-[8px] leading-3 text-white">
        <div className="pr-2">13:31</div>
        <div>21.04.2022</div>
      </div>
    </div>
  );
}
